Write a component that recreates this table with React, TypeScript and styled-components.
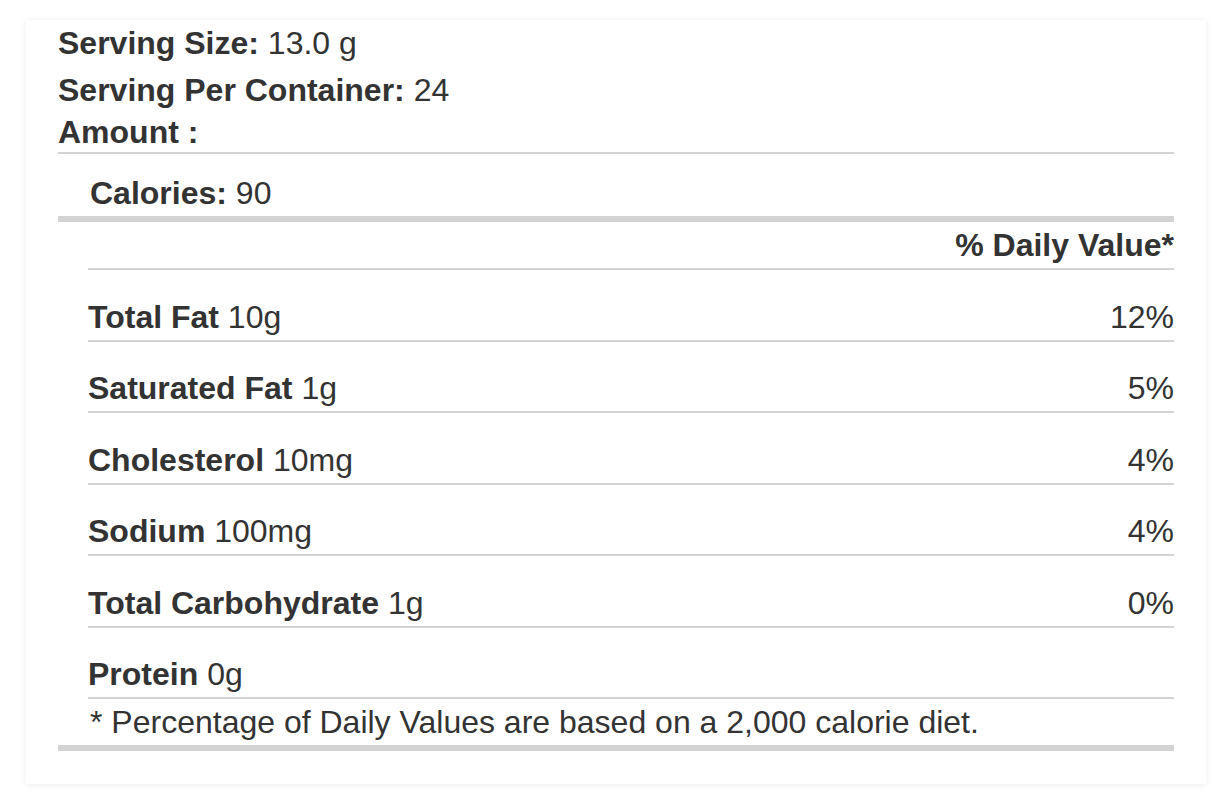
import React from "react";
import styled, { createGlobalStyle } from "styled-components";

const GlobalStyle = createGlobalStyle`
  html, body {
    margin: 0;
    padding: 0;
    background: #ffffff;
  }
  body {
    font-family: "Liberation Sans", Arial, Helvetica, sans-serif;
    color: #333333;
  }
`;

const Page = styled.div`
  padding: 20px 8px 26px 26px;
`;

const Card = styled.section`
  width: 1180px;
  height: 764px;
  box-sizing: border-box;
  background: #ffffff;
  box-shadow: 0 1px 6px rgba(0, 0, 0, 0.08);
  padding: 0 32px 32px 32px;
  display: flex;
  flex-direction: column;
`;

const InfoLine = styled.div<{ $gap?: number }>`
  font-size: 32px;
  line-height: 30px;
  margin-top: ${(p) => p.$gap ?? 0}px;
  white-space: nowrap;
`;

const Strong = styled.b`
  font-weight: 700;
`;

const Rule = styled.hr<{ $thick?: boolean; $indent?: number; $gap?: number }>`
  border: none;
  margin: ${(p) => p.$gap ?? 0}px 0 0 ${(p) => p.$indent ?? 0}px;
  height: ${(p) => (p.$thick ? 6 : 2)}px;
  background: #d3d3d3;
`;

const Calories = styled.div`
  font-size: 32px;
  line-height: 30px;
  margin: 24px 0 8px 32px;
`;

const Table = styled.div`
  margin-left: 30px;
  display: flex;
  flex-direction: column;
`;

const DailyHeader = styled.div`
  font-size: 32px;
  line-height: 30px;
  font-weight: 700;
  text-align: right;
  padding: 8px 0 8px 0;
  border-bottom: 2px solid #d3d3d3;
`;

const NutrientRow = styled.div`
  display: flex;
  justify-content: space-between;
  align-items: baseline;
  font-size: 32px;
  line-height: 30px;
  padding: 31.5px 0 8px 0;
  border-bottom: 2px solid #d3d3d3;
`;

const Footnote = styled.div`
  font-size: 32px;
  line-height: 30px;
  padding: 8px 0 8px 2px;
  white-space: nowrap;
`;

type Nutrient = { name: string; amount: string; dv?: string };

const nutrients: Nutrient[] = [
  { name: "Total Fat", amount: "10g", dv: "12%" },
  { name: "Saturated Fat", amount: "1g", dv: "5%" },
  { name: "Cholesterol", amount: "10mg", dv: "4%" },
  { name: "Sodium", amount: "100mg", dv: "4%" },
  { name: "Total Carbohydrate", amount: "1g", dv: "0%" },
  { name: "Protein", amount: "0g" },
];

export default function App() {
  return (
    <>
      <GlobalStyle />
      <Page>
        <Card>
          <InfoLine $gap={7.5}>
            <Strong>Serving Size:</Strong> 13.0 g
          </InfoLine>
          <InfoLine $gap={17.5}>
            <Strong>Serving Per Container:</Strong> 24
          </InfoLine>
          <InfoLine $gap={12}>
            <Strong>Amount :</Strong>
          </InfoLine>
          <Rule $gap={5} />
          <Calories>
            <Strong>Calories:</Strong> 90
          </Calories>
          <Rule $thick />
          <Table>
            <DailyHeader>% Daily Value*</DailyHeader>
            {nutrients.map((n) => (
              <NutrientRow key={n.name}>
                <span>
                  <Strong>{n.name}</Strong> {n.amount}
                </span>
                <span>{n.dv ?? ""}</span>
              </NutrientRow>
            ))}
            <Footnote>* Percentage of Daily Values are based on a 2,000 calorie diet.</Footnote>
          </Table>
          <Rule $thick />
        </Card>
      </Page>
    </>
  );
}
